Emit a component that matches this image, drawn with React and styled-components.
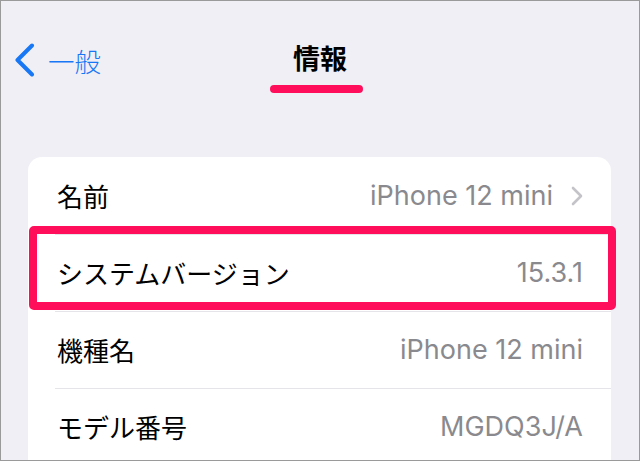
import React from 'react';
import styled, { createGlobalStyle } from 'styled-components';

const GlobalStyle = createGlobalStyle`
    body {
        margin: 0;
        font-family: "Inter", "Noto Sans CJK JP", sans-serif;
    }
`;

const rows = [
    { label: '名前', value: 'iPhone 12 mini', link: true },
    { label: 'システムバージョン', value: '15.3.1' },
    { label: '機種名', value: 'iPhone 12 mini' },
    { label: 'モデル番号', value: 'MGDQ3J/A' },
];

const App = () => {
    return (
        <Frame>
            <GlobalStyle />
            <NavBar>
                <BackLink>
                    <svg width="22" height="34" viewBox="0 0 22 34">
                        <path d="M19 2.5 L4.5 17 L19 31.5" fill="none" stroke="currentColor" strokeWidth="4" strokeLinecap="round" strokeLinejoin="round" />
                    </svg>
                    <span>一般</span>
                </BackLink>
                <TitleWrap>
                    <Title>情報</Title>
                    <Underline />
                </TitleWrap>
                <div />
            </NavBar>
            <Card>
                {rows.map((r, i) => (
                    <Row key={r.label} $divider={i > 0}>
                        <Label>{r.label}</Label>
                        <Value>
                            {r.value}
                            {r.link && (
                                <svg width="12" height="20" viewBox="0 0 12 20">
                                    <path d="M2 2 L10 10 L2 18" fill="none" stroke="#c4c4c8" strokeWidth="2.6" strokeLinecap="round" strokeLinejoin="round" />
                                </svg>
                            )}
                        </Value>
                    </Row>
                ))}
                <Highlight />
            </Card>
        </Frame>
    );
};

const Frame = styled.div`
    width: 640px;
    height: 461px;
    box-sizing: border-box;
    border: 1px solid #9a9a9a;
    background: #f0eff5;
    overflow: hidden;
`;

const NavBar = styled.div`
    display: grid;
    grid-template-columns: 1fr auto 1fr;
    align-items: start;
    height: 156px;
    padding: 39px 12px 0;
    box-sizing: border-box;
`;

const BackLink = styled.div`
    display: flex;
    align-items: center;
    gap: 13px;
    height: 40px;
    color: #1877f5;
    font-size: 26.5px;
    font-weight: 300;
`;

const TitleWrap = styled.div`
    display: flex;
    flex-direction: column;
    align-items: center;
`;

const Title = styled.div`
    font-size: 27px;
    font-weight: 700;
    line-height: 40px;
    color: #000;
`;

const Underline = styled.div`
    width: 93px;
    height: 8px;
    margin: 5px 7px 0 0;
    border-radius: 4px;
    background: #ff0f5b;
`;

const Card = styled.div`
    position: relative;
    margin: 0 28px 0 27px;
    background: #fff;
    border-radius: 14px 14px 0 0;
`;

const Row = styled.div`
    position: relative;
    display: flex;
    align-items: center;
    justify-content: space-between;
    height: 77px;
    padding: 0 28px 0 29px;

    &::before {
        content: '';
        display: ${p => (p.$divider ? 'block' : 'none')};
        position: absolute;
        top: 0;
        left: 27px;
        right: 0;
        height: 1px;
        background: #e4e4e9;
    }
`;

const Label = styled.span`
    font-size: 26px;
    color: #000;
`;

const Value = styled.span`
    display: flex;
    align-items: center;
    gap: 18px;
    font-size: 27px;
    color: #8a8a8e;
`;

const Highlight = styled.div`
    position: absolute;
    top: 69px;
    left: 1px;
    right: -5px;
    height: 84px;
    box-sizing: border-box;
    border: 8px solid #ff0f5b;
    border-radius: 5px;
`;

export default App;
